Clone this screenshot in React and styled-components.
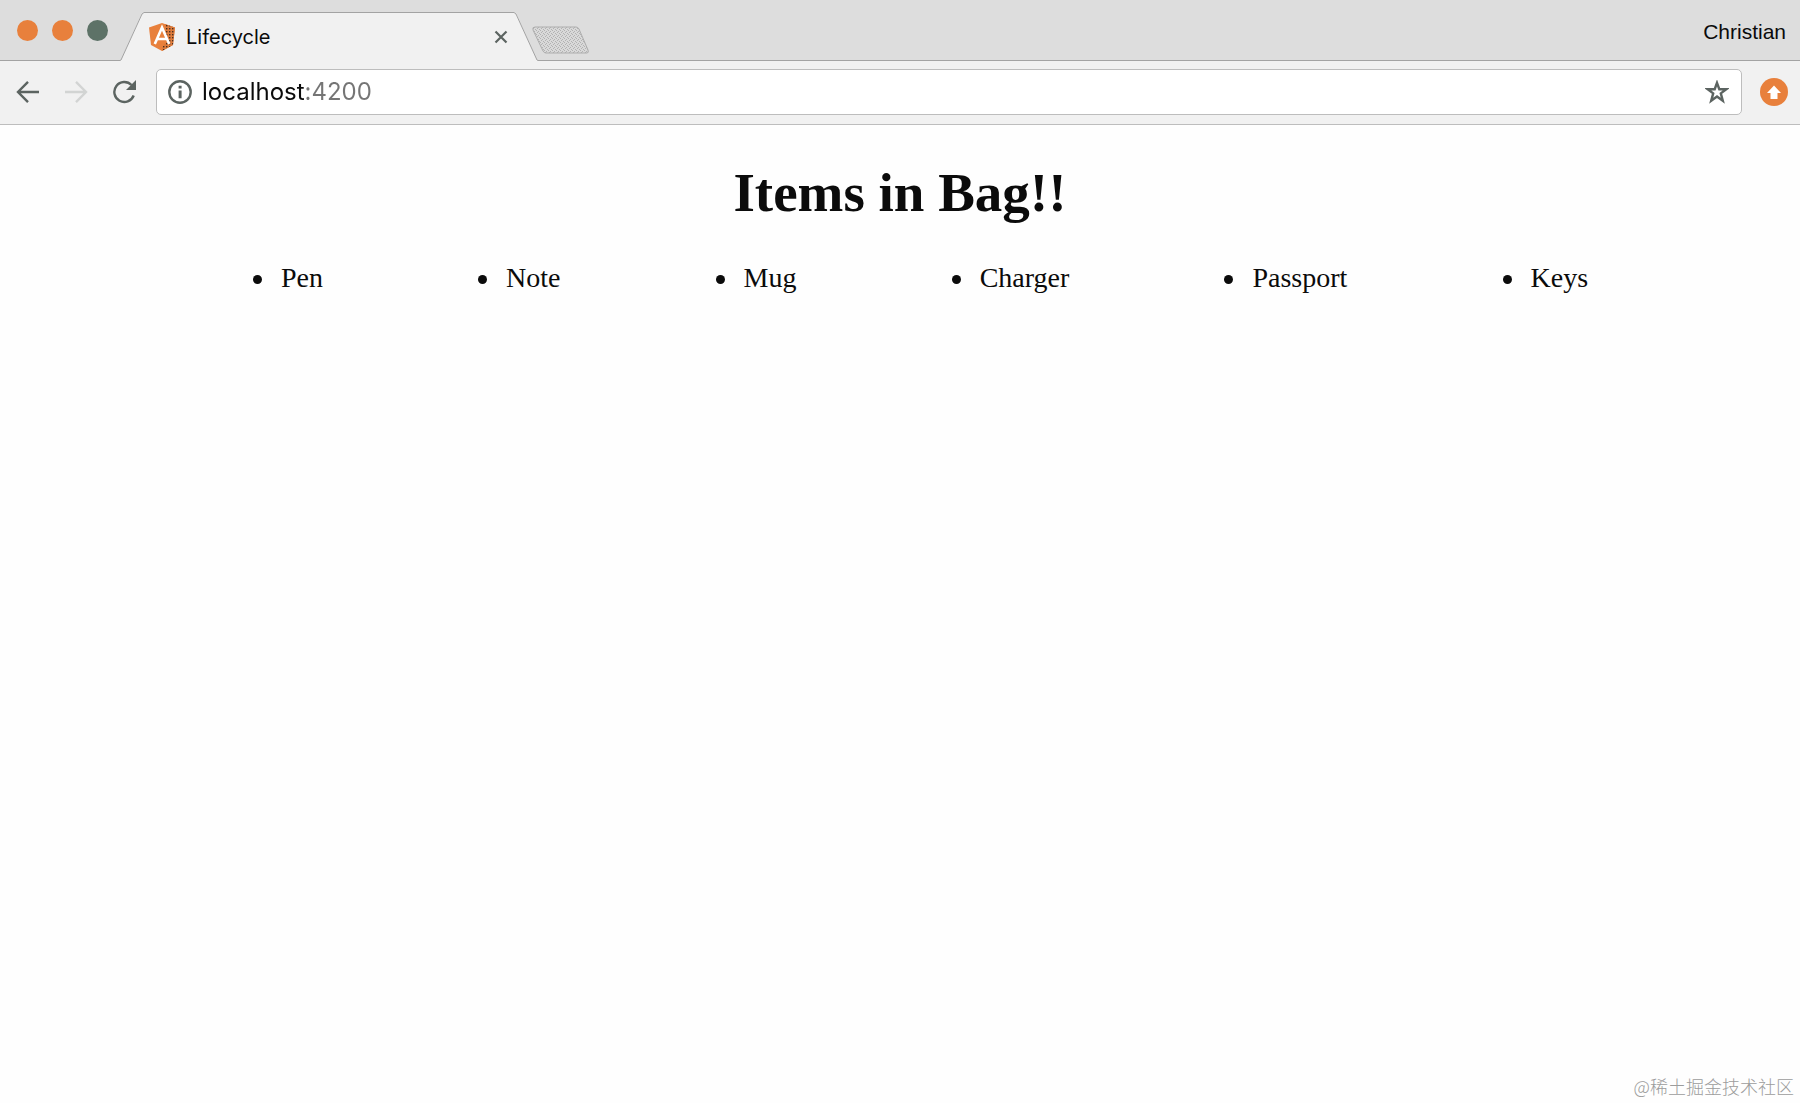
import React, { Component } from 'react'
import styled, { createGlobalStyle } from 'styled-components'

const colors = {
  ink: '#0b0b0b',
  strip: '#dddddd',
  toolbar: '#f1f1f1',
  line: '#a3a3a3',
  softLine: '#bdbdbd',
  icon: '#5c6461',
  orange: '#e8803c',
  green: '#5d7267',
}

const GlobalStyle = createGlobalStyle`
  * {
    box-sizing: border-box;
  }
  body {
    margin: 0;
    background: #fefefe;
    color: ${colors.ink};
  }
`

const Favicon = () => (
  <svg width="28" height="30" viewBox="0 0 28 30" aria-hidden="true">
    <defs>
      <pattern id="dots" width="3" height="3" patternUnits="userSpaceOnUse">
        <rect width="3" height="3" fill="#de7b3b" />
        <rect width="1.4" height="1.4" fill="#4a3020" />
      </pattern>
    </defs>
    <path d="M14 1 27 5.5 25 23 14 29 3 23 1 5.5Z" fill={colors.orange} />
    <path d="M17 2 27 5.5 25 23 14 29V25L19 20Z" fill="url(#dots)" />
    <path
      d="M6.8 22 14 5.5 21.2 22M9.5 17h9"
      fill="none"
      stroke="#fff"
      strokeWidth="2.6"
    />
  </svg>
)

export default class App extends Component {
  state = {
    url: 'localhost:4200',
    items: ['Pen', 'Note', 'Mug', 'Charger', 'Passport', 'Keys'],
  }

  handleChange = event => {
    this.setState({ url: event.target.value })
  }

  render() {
    const { url, items } = this.state
    return (
      <Window>
        <GlobalStyle />
        <TabStrip>
          <Lights>
            <Light $color={colors.orange} aria-label="Close window" />
            <Light $color={colors.orange} aria-label="Minimize window" />
            <Light $color={colors.green} aria-label="Zoom window" />
          </Lights>
          <TabEdge width="24" height="49" viewBox="0 0 24 49">
            <path d="M0 49V48Q1 48 2 46L21 3Q22 .5 24 .5V49Z" />
            <polyline points="0,48.5 1,48 22,2 24,.5" />
          </TabEdge>
          <Tab>
            <Favicon />
            <TabTitle>Lifecycle</TabTitle>
            <CloseButton aria-label="Close tab">
              <svg width="14" height="14" viewBox="0 0 14 14">
                <path d="M1.5 1.5l11 11M12.5 1.5l-11 11" />
              </svg>
            </CloseButton>
          </Tab>
          <TabEdge width="24" height="49" viewBox="0 0 24 49">
            <path d="M24 49V48Q23 48 22 46L3 3Q2 .5 0 .5V49Z" />
            <polyline points="24,48.5 23,48 2,2 0,.5" />
          </TabEdge>
          <NewTab aria-label="New tab">
            <svg width="58" height="28" viewBox="0 0 58 28">
              <defs>
                <pattern
                  id="grain"
                  width="4"
                  height="4"
                  patternUnits="userSpaceOnUse"
                >
                  <rect width="4" height="4" fill="#d9d9d9" />
                  <path
                    d="M0 0h1v1H0zM2 1h1v1H2zM1 2h1v1H1zM3 3h1v1H3z"
                    fill="#b2b2b2"
                  />
                </pattern>
              </defs>
              <path
                d="M3 1H44Q46 1 47 3L56 24Q57 27 55 27H14Q12 27 11 25L1 4Q0 1 3 1Z"
                fill="url(#grain)"
                stroke="#adadad"
              />
            </svg>
          </NewTab>
          <Profile>Christian</Profile>
        </TabStrip>
        <Toolbar>
          <IconButton aria-label="Back">
            <svg width="24" height="24" viewBox="0 0 24 24">
              <path d="M23 12H2.5M12 1.8 2 12l10 10.2" />
            </svg>
          </IconButton>
          <IconButton $faded aria-label="Forward">
            <svg width="24" height="24" viewBox="0 0 24 24">
              <path d="M1 12h20.5M12 1.8 22 12 12 22.2" />
            </svg>
          </IconButton>
          <IconButton aria-label="Reload">
            <svg width="24" height="24" viewBox="0 0 24 24">
              <path d="M19.5 5A10 10 0 1 0 21.7 15.5" />
              <path className="solid" d="M24 0V10H14Z" />
            </svg>
          </IconButton>
          <AddressBar>
            <svg width="24" height="24" viewBox="0 0 24 24" aria-hidden="true">
              <circle cx="12" cy="12" r="10.7" />
              <path className="solid" d="M10.6 5.8h3v2.8h-3zM10.6 10.4h3v7.8h-3z" />
            </svg>
            <Address
              aria-label="Address"
              value={url}
              onChange={this.handleChange}
            />
            <IconButton aria-label="Bookmark">
              <svg width="24" height="24" viewBox="0 0 24 24">
                <path d="M12 2.8 14.3 9.2H21.3L15.8 13.4 17.8 20.8 12 16.5 6.2 20.8 8.2 13.4 2.7 9.2H9.7Z" />
              </svg>
            </IconButton>
          </AddressBar>
          <UpdateButton aria-label="Update">
            <svg width="28" height="28" viewBox="0 0 28 28">
              <circle cx="14" cy="14" r="14" fill={colors.orange} />
              <path d="M14 7.5 21 15H17.5V21H10.5V15H7Z" fill="#fff" />
            </svg>
          </UpdateButton>
        </Toolbar>
        <Page>
          <Heading>Items in Bag!!</Heading>
          <ItemList>
            {items.map(item => (
              <Item key={item}>{item}</Item>
            ))}
          </ItemList>
        </Page>
        <Credit>@稀土掘金技术社区</Credit>
      </Window>
    )
  }
}

const Window = styled.div`
  min-height: 100vh;
  display: flex;
  flex-direction: column;
  font-family: Inter, 'Liberation Sans', sans-serif;
  button {
    border: 0;
    padding: 0;
    background: none;
  }
`

const TabStrip = styled.header`
  height: 61px;
  display: flex;
  align-items: flex-end;
  background: linear-gradient(
    ${colors.strip} 60px,
    ${colors.line} 60px
  );
`

const Lights = styled.div`
  width: 120px;
  padding: 0 0 20px 17px;
  display: flex;
  gap: 14px;
`

const Light = styled.button`
  width: 21px;
  height: 21px;
  border-radius: 50%;
  && {
    background: ${props => props.$color};
  }
`

const TabEdge = styled.svg`
  display: block;
  flex: none;
  path {
    fill: ${colors.toolbar};
  }
  polyline {
    fill: none;
    stroke: ${colors.line};
  }
`

const Tab = styled.div`
  width: 370px;
  height: 49px;
  padding: 0 6px 0 4px;
  display: flex;
  align-items: center;
  gap: 10px;
  background: ${colors.toolbar};
  border-top: 1px solid ${colors.line};
`

const TabTitle = styled.span`
  flex: 1;
  font-size: 20px;
`

const CloseButton = styled.button`
  height: 14px;
  display: flex;
  path {
    stroke: ${colors.icon};
    stroke-width: 2.2;
  }
`

const NewTab = styled.button`
  height: 28px;
  margin: 0 auto 7px -6px;
`

const Profile = styled.span`
  padding: 0 14px 16px 0;
  font-family: 'Liberation Sans', sans-serif;
  font-size: 21px;
  line-height: 26px;
`

const Toolbar = styled.nav`
  height: 64px;
  padding: 0 12px 1px 16px;
  display: flex;
  align-items: center;
  gap: 24px;
  background: ${colors.toolbar};
  border-bottom: 1px solid ${colors.softLine};
  svg {
    display: block;
    fill: none;
    stroke: ${colors.icon};
    stroke-width: 2.4;
  }
  .solid {
    fill: ${colors.icon};
    stroke: none;
  }
`

const IconButton = styled.button`
  flex: none;
  opacity: ${props => (props.$faded ? 0.2 : 1)};
`

const AddressBar = styled.div`
  flex: 1;
  height: 46px;
  margin-left: -4px;
  padding: 0 12px 0 11px;
  display: flex;
  align-items: center;
  gap: 10px;
  background: #fff;
  border: 1px solid ${colors.softLine};
  border-radius: 5px;
`

// host is dark, the port after it is grey
const Address = styled.input`
  flex: 1;
  min-width: 0;
  padding: 0;
  border: 0;
  outline: 0;
  font: 24px/32px Inter, 'Liberation Sans', sans-serif;
  background: linear-gradient(to right, ${colors.ink} 102px, #757575 102px);
  background-clip: text;
  color: transparent;
  caret-color: ${colors.ink};
`

const UpdateButton = styled.button`
  margin-left: -6px;
  svg {
    stroke: none;
  }
`

const Page = styled.main`
  flex: 1;
  padding: 0 14px;
  font-family: 'Liberation Serif', serif;
`

const Heading = styled.h1`
  margin: 36px 0;
  font-size: 55px;
  line-height: 64px;
  text-align: center;
`

const ItemList = styled.ul`
  width: 88%;
  margin: 0 auto;
  padding: 0 0 0 69px;
  display: flex;
  justify-content: space-around;
  list-style: none;
  font-size: 28px;
  line-height: 34px;
`

const Item = styled.li`
  &::before {
    content: '';
    display: inline-block;
    width: 9px;
    height: 9px;
    margin: 0 19px 0 -28px;
    border-radius: 50%;
    background: ${colors.ink};
    vertical-align: 3px;
  }
`

const Credit = styled.footer`
  padding: 0 6px 4px;
  font: 300 18px/26px 'Noto Sans CJK SC', sans-serif;
  color: #9c9c9c;
  text-align: right;
`
